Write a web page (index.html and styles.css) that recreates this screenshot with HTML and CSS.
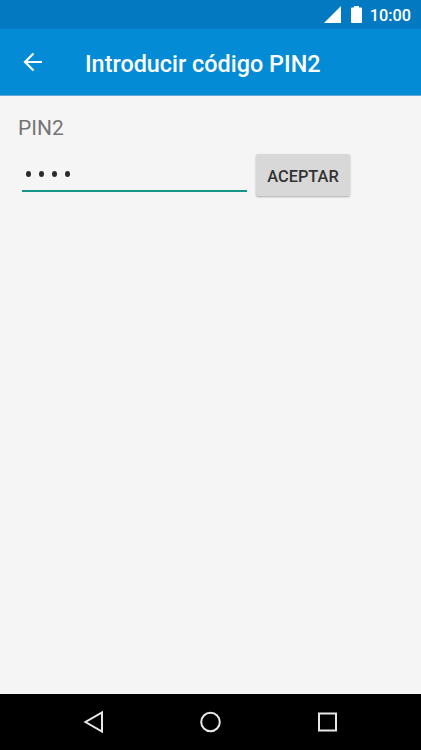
FILE: index.html
```html
<!DOCTYPE html>
<html lang="es">
<head>
    <meta charset="UTF-8">
    <meta name="viewport" content="width=device-width, initial-scale=1.0">
    <title>Introducir código PIN2</title>
    <link rel="stylesheet" href="styles.css">
</head>
<body>
    <div class="status-bar">
        <svg class="signal" width="17" height="17" viewBox="0 0 17 17"><path d="M17 0v17H0z"/></svg>
        <svg class="battery" width="11" height="17" viewBox="0 0 11 17"><path d="M3 0h5v1.500h2q1 0 1 1V16q0 1-1 1H1q-1 0-1-1V2.500q0-1 1-1h2z"/></svg>
        <span class="clock">10:00</span>
    </div>
    <header class="toolbar">
        <svg class="back" width="20" height="20" viewBox="0 0 20 20"><path d="M19 10H2M10.500 1.500L2 10l8.500 8.500"/></svg>
        <h1>Introducir código PIN2</h1>
    </header>
    <main>
        <label class="label" for="pin2">PIN2</label>
        <div class="row">
            <div class="field" id="pin2"><i></i><i></i><i></i><i></i></div>
            <button class="accept">ACEPTAR</button>
        </div>
    </main>
    <nav class="nav-bar">
        <svg width="22" height="24" viewBox="0 0 22 24"><path d="M19 2.500v19L2.500 12z"/></svg>
        <svg width="22" height="24" viewBox="0 0 22 24"><circle cx="10.500" cy="12" r="9.300"/></svg>
        <svg width="22" height="24" viewBox="0 0 22 24"><path d="M2 3.500h17v17H2z"/></svg>
    </nav>
</body>
</html>
```
FILE: styles.css
```css
* {
    box-sizing: border-box;
}
body {
    margin: 0;
    height: 750px;
    display: flex;
    flex-direction: column;
    background: #f5f5f5;
    font-family: Roboto, sans-serif;
}
.status-bar {
    height: 29px;
    padding: 0 10px 0 0;
    display: flex;
    justify-content: flex-end;
    align-items: center;
    background: #0279c1;
    color: #fff;
}
.status-bar svg {
    fill: #fff;
}
.battery {
    margin: 0 8px 0 10px;
}
.clock {
    padding-top: 2px;
    font-size: 16.3px;
    font-weight: 500;
}
.toolbar {
    height: 67px;
    padding-left: 23px;
    display: flex;
    align-items: center;
    background: #038bd5;
    border-bottom: 1px solid #5fabd6;
    color: #fff;
}
.back {
    fill: none;
    stroke: #fff;
    stroke-width: 2.2;
}
h1 {
    margin: 3px 0 0 42px;
    font-size: 23.4px;
    font-weight: 500;
}
main {
    flex: 1;
    padding: 19px 18px;
}
.label {
    display: block;
    font-size: 21px;
    line-height: 26px;
    color: #757575;
}
.row {
    display: flex;
    align-items: flex-start;
    margin-top: 13px;
}
.field {
    width: 225px;
    height: 38px;
    margin: 0 9px 0 4px;
    padding: 17px 0 0 4px;
    display: flex;
    gap: 8px;
    border-bottom: 2px solid #159588;
}
.field i {
    width: 5px;
    height: 6px;
    border-radius: 50%;
    background: #2b2b2b;
}
.accept {
    width: 94px;
    height: 42px;
    padding: 3px 0 0;
    border: 0;
    border-radius: 2px;
    background: #d8d8d8;
    box-shadow: 0 1px 2px rgba(0, 0, 0, .3);
    font: 500 16.4px Roboto, sans-serif;
    color: #333;
}
.nav-bar {
    height: 56px;
    display: flex;
    justify-content: center;
    align-items: center;
    gap: 95px;
    background: #000;
}
.nav-bar svg {
    fill: none;
    stroke: #e8e8e8;
    stroke-width: 2;
}
```
